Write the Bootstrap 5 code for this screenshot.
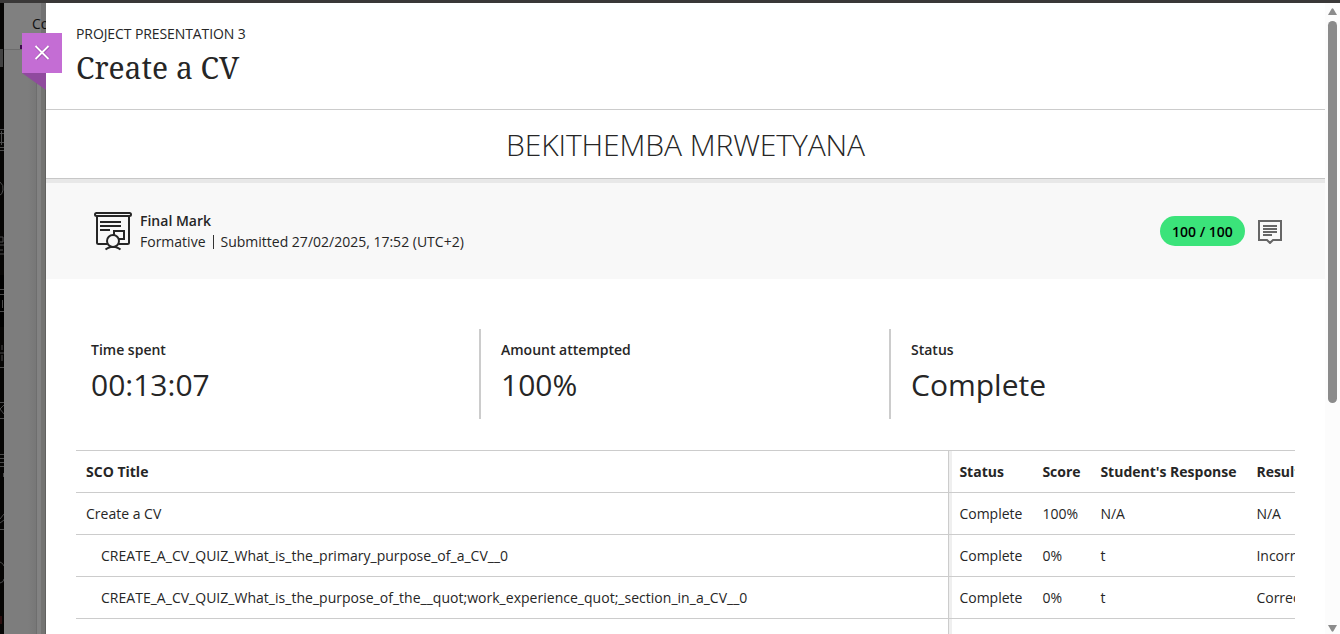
<!DOCTYPE html>
<html lang="en">
<head>
<meta charset="utf-8">
<meta name="viewport" content="width=device-width, initial-scale=1">
<title>Create a CV</title>
<link rel="stylesheet" href="https://cdn.jsdelivr.net/npm/bootstrap@5.3.0/dist/css/bootstrap.min.css">
<style>
body{font-family:"Open Sans","Noto Sans",sans-serif;font-size:14px;line-height:21px;color:#262626;height:634px}
.topstrip{height:3px;background:#3a3838}
/* dimmed page behind the panel */
.underlay{width:46px;background:linear-gradient(90deg,#7d7d7d 0 28px,#777 36px,#6e6e6e 36px 37px,#828282 37px 41px,#747472 41px 45px,#626260 45px)}
.tabs-behind{height:47px;padding:10px 0 0 28px;background:linear-gradient(90deg,#808080 0 37px,#727272 37px);border-bottom:1px solid #6c6c6c;color:#111;font-weight:500;white-space:nowrap}
.tab-mark{left:20px;top:45px;width:4px;height:4px;background:#3c0d4b}
.closer{left:22px;top:33px;z-index:5}
.closer button{width:40px;height:40px;background:#c46dd4}
.closer svg{display:block}
.panel{width:1279px}
.panel-head{height:107px;padding:20px 30px 0;border-bottom:1px solid #ccc}
.panel-head .kicker{letter-spacing:-.09px}
.panel-head h1{font-family:"Noto Serif","Droid Serif","DejaVu Serif",serif;font-size:30px;line-height:40px;color:#262626}
.student-name{height:69px;border-bottom:1px solid #c7c7c7;line-height:69px;font-size:30px;font-weight:300;letter-spacing:-.1px}
.band{height:4px;background:#e8e8e8}
.mark-row{height:96px;background:#f8f8f8;padding:0 43px 0 48px}
.fw6{font-weight:600}
.sep{width:1px;height:14px;background:#333;margin:0 7px}
.pill{width:85px;height:30px;margin-right:13px;background:#3be37a;color:#000;font-weight:600}
.stats{margin:50px 30px 31px;height:90px}
.stat{width:410px;padding:10px 15px 0;border-right:2px solid #ccc}
.stat+.stat{padding-left:20px}
.stat:first-child{width:405px}
.stat:last-child{border:0;width:399px}
.stat-num{font-size:30px;line-height:41px;margin-top:4px}
.sco{margin:0 30px;height:200px}
.sco table{width:1280px;table-layout:fixed;border-collapse:separate;border-spacing:0}
.sco th,.sco td{height:42px;padding:0 10px;border-bottom:1px solid #ccc;white-space:nowrap;line-height:21px;color:#262626}
.sco tr:first-child th{border-top:1px solid #ccc;height:43px}
.sco tr>:nth-child(1){border-right:1px solid #ccc}
.sco tr>:nth-child(n+2){padding-left:10.400px}
.sco tr>:nth-child(2){box-shadow:inset 3px 0 #efefef}
.sco tr>.kid{padding-left:25px;letter-spacing:.02px}
.scroller{width:15px;background:#fcfcfc}
.thumb{width:9px;height:382px;border-radius:5px;background:#8b8b8b}
</style>
</head>
<body class="overflow-hidden d-flex flex-column bg-white">
<div class="topstrip flex-shrink-0"></div>
<div class="d-flex flex-grow-1 overflow-hidden">
  <div class="underlay d-flex flex-shrink-0 overflow-hidden" aria-hidden="true">
    <svg width="4" height="631" class="flex-shrink-0">
      <rect width="4" height="631" fill="#060504"/>
      <rect y="46" width="3" height="18" fill="#414141"/>
      <rect y="272" width="4" height="52" fill="#000"/>
      <g stroke="#4b4b4b" fill="none">
        <path d="M0 126.500h4M0 130.500h4M1.500 128v14M0 139.500h4M0 144.500h4M0 147.500h4M0 179q4 3 3 8t-3 5M0 234h3v5h-3m0 3h4m-4 5h3m-3 4h4M0 286.500h4M0 291.500h4M2.500 297v8M0 308.500h4M2 342v5M0 350h4m-2 2v6"/>
        <path d="M0 364.500h4M0 399.500h4M4 402l-4 4l4 5M0 415.500h4M0 451.500h4m-4 4h4m-4 4h4m-4 4h4M3.500 470v4M0 516l4-5m-4 9l4-3M0 526.500h4M0 559q3 1 4 4M0 580q4-1 4-4"/>
      </g>
      <path d="M1 613v8" stroke="#501818"/>
    </svg>
    <div class="flex-shrink-0 w-100"><div class="tabs-behind">Course</div></div>
  </div>
  <main class="panel bg-white flex-shrink-0 overflow-hidden">
    <header class="panel-head">
      <div class="kicker">PROJECT PRESENTATION 3</div>
      <h1 class="m-0 mt-1 fw-normal">Create a CV</h1>
    </header>
    <div class="student-name text-center">BEKITHEMBA MRWETYANA</div>
    <div class="band"></div>
    <section class="mark-row d-flex align-items-center">
      <svg width="38" height="40" viewBox="0 0 38 40" fill="none" stroke="#262626" stroke-width="2" class="flex-shrink-0">
        <rect x="1" y="2" width="36" height="3" rx="1.500"/>
        <path d="M3 5v26.500q0 1.500 1.500 1.500H13M35 5v26.500q0 1.500-1.500 1.500H25M6 11h21M6 15h21M6 19h10M20 24v-4h10v8h-5"/>
        <circle cx="19" cy="30" r="6"/>
        <path d="M11.500 38.500q2-1.500 5-2.500h5q3 1 5 2.500"/>
      </svg>
      <div class="ms-2 flex-grow-1">
        <div class="fw6">Final Mark</div>
        <div class="d-flex align-items-center">Formative<span class="sep"></span><span class="ps-0">Submitted 27/02/2025, 17:52 (UTC+2)</span></div>
      </div>
      <div class="pill rounded-pill d-flex align-items-center justify-content-center">100 / 100</div>
      <svg width="24" height="25" viewBox="0 0 24 25" fill="none" stroke="#666" stroke-width="2">
        <path d="M1 2h22v19h-8l-3 3l-3-3H1zM5 7h14M5 10h14M5 13h14M5 16h9"/>
      </svg>
    </section>
    <section class="stats d-flex">
      <div class="stat"><div class="fw6">Time spent</div><div class="stat-num">00:13:07</div></div>
      <div class="stat"><div class="fw6">Amount attempted</div><div class="stat-num">100%</div></div>
      <div class="stat"><div class="fw6">Status</div><div class="stat-num">Complete</div></div>
    </section>
    <div class="sco overflow-hidden">
      <table>
        <colgroup><col style="width:873px"><col style="width:83px"><col style="width:58px"><col style="width:156px"><col style="width:110px"></colgroup>
        <tbody>
          <tr><th>SCO Title</th><th>Status</th><th>Score</th><th>Student's Response</th><th>Result</th></tr>
          <tr><td>Create a CV</td><td>Complete</td><td>100%</td><td>N/A</td><td>N/A</td></tr>
          <tr><td class="kid">CREATE_A_CV_QUIZ_What_is_the_primary_purpose_of_a_CV__0</td><td>Complete</td><td>0%</td><td>t</td><td>Incorrect</td></tr>
          <tr><td class="kid">CREATE_A_CV_QUIZ_What_is_the_purpose_of_the__quot;work_experience_quot;_section_in_a_CV__0</td><td>Complete</td><td>0%</td><td>t</td><td>Correct</td></tr>
          <tr><td></td><td></td><td></td><td></td><td></td></tr>
        </tbody>
      </table>
    </div>
  </main>
  <div class="scroller d-flex flex-column align-items-center flex-shrink-0" aria-hidden="true">
    <svg width="15" height="18"><path d="M3 12L6.500 6Q7.500 4.500 8.500 6L12 12z" fill="#8b8b8b"/></svg>
    <div class="thumb"></div>
    <svg class="mt-auto" width="15" height="12"><path d="M3 3h9L8.500 9Q7.500 10.500 6.500 9z" fill="#8b8b8b"/></svg>
  </div>
</div>
<div class="tab-mark position-absolute"></div>
<div class="closer position-absolute">
  <button class="border-0 p-0 d-block" aria-label="Close"><svg width="40" height="40" fill="none"><path d="M14 13.500l12.500 12.500M26.500 13.500L14 26" stroke="#7d3a8b" stroke-width="3.500" opacity=".45"/><path d="M13.500 13L26.500 26M26.500 13L13.500 26" stroke="#fff" stroke-width="1.800"/></svg></button>
  <svg width="24" height="17"><path d="M0 0h24v17z" fill="#904a9e"/></svg>
</div>
<script src="https://cdn.jsdelivr.net/npm/bootstrap@5.3.0/dist/js/bootstrap.bundle.min.js"></script>
</body>
</html>
